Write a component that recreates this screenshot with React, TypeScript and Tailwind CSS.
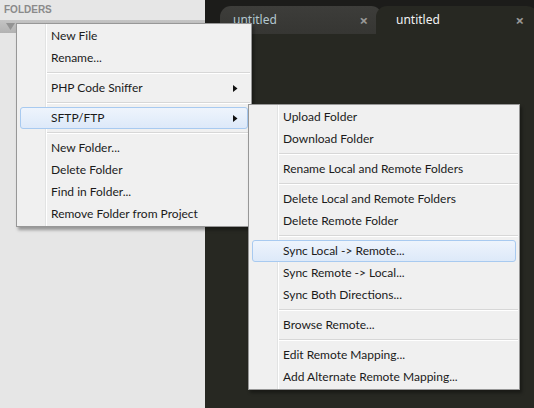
import React from 'react';

type Entry = { label: string; sub?: boolean; active?: boolean } | 'sep';

const folderMenu: Entry[] = [
    { label: 'New File' },
    { label: 'Rename...' },
    'sep',
    { label: 'PHP Code Sniffer', sub: true },
    'sep',
    { label: 'SFTP/FTP', sub: true, active: true },
    'sep',
    { label: 'New Folder...' },
    { label: 'Delete Folder' },
    { label: 'Find in Folder...' },
    { label: 'Remove Folder from Project' },
];

const sftpMenu: Entry[] = [
    { label: 'Upload Folder' },
    { label: 'Download Folder' },
    'sep',
    { label: 'Rename Local and Remote Folders' },
    'sep',
    { label: 'Delete Local and Remote Folders' },
    { label: 'Delete Remote Folder' },
    'sep',
    { label: 'Sync Local -> Remote...', active: true },
    { label: 'Sync Remote -> Local...' },
    { label: 'Sync Both Directions...' },
    'sep',
    { label: 'Browse Remote...' },
    'sep',
    { label: 'Edit Remote Mapping...' },
    { label: 'Add Alternate Remote Mapping...' },
];

function ContextMenu({ items, className }: { items: Entry[]; className: string }) {
    return (
        <div
            className={`absolute border border-[#979797] bg-[#f0f0f0] py-px shadow-[2px_3px_3px_rgba(0,0,0,0.35)] ${className}`}
            style={{ fontFamily: 'Lato, "Liberation Sans", sans-serif' }}
        >
            {/* gutter line */}
            <div className="absolute top-0 bottom-0 left-[28px] w-[2px] border-l border-[#e2e3e3] bg-white" />
            {items.map((item, i) =>
                item === 'sep' ? (
                    <div key={i} className="h-2 flex items-center pl-[30px] pr-[1px]">
                        <div className="w-full h-[2px] border-t border-[#d7d7d7] bg-white" />
                    </div>
                ) : (
                    <div
                        key={i}
                        className={`relative h-[22px] mx-[3px] flex items-center pl-[30px] pr-2 text-[12px] text-[#1b1b1b] rounded-[3px] border ${
                            item.active
                                ? 'border-[#a8caf0] bg-gradient-to-b from-[#eef4fc] to-[#dde9f9]'
                                : 'border-transparent'
                        }`}
                    >
                        <span className="flex-1 whitespace-nowrap">{item.label}</span>
                        {item.sub && (
                            <svg width="5" height="7" viewBox="0 0 5 7" className="mr-[1px]">
                                <path d="M0 0 L4.5 3.5 L0 7 Z" fill="#111" />
                            </svg>
                        )}
                    </div>
                )
            )}
        </div>
    );
}

function Tab({ title, active }: { title: string; active?: boolean }) {
    return (
        <div
            className={`h-[28px] w-[162px] flex items-center justify-between pl-[13px] pr-[14px] rounded-t-[11px] text-[12px] ${
                active
                    ? 'bg-[#272822] text-[#f2f2f2] -ml-[6px] pl-[20px] z-10'
                    : 'bg-gradient-to-b from-[#3d3d3a] to-[#363633] text-[#b3c7cf] shadow-[0_1px_0_#1f1f1d]'
            }`}
            style={{ fontFamily: '"Noto Sans", "Open Sans", sans-serif' }}
        >
            <span>{title}</span>
            <span className="text-[15px] leading-none font-bold text-[#9a9a98]">×</span>
        </div>
    );
}

export default function App() {
    return (
        <div className="relative w-[534px] h-[408px] overflow-hidden flex bg-[#272822]">
            <aside className="w-[205px] shrink-0 h-full bg-[#e6e6e6] flex flex-col">
                <div
                    className="h-[20px] pl-1 pt-[5px] text-[10px] font-bold leading-none text-[#8a8a8a]"
                    style={{ fontFamily: '"Liberation Sans", Arial, sans-serif' }}
                >
                    FOLDERS
                </div>
                <div className="h-[13px] bg-gradient-to-b from-[#c4c4c4] to-[#b2b2b2] flex items-center pl-[6px]">
                    <svg width="9" height="7" viewBox="0 0 9 7">
                        <path d="M0 0 H9 L4.5 7 Z" fill="#939393" />
                    </svg>
                </div>
            </aside>

            <main className="flex-1 flex flex-col">
                <div className="h-[34px] bg-[#1c1c1a] flex items-end pl-[15px]">
                    <Tab title="untitled" />
                    <Tab title="untitled" active />
                </div>
                <div className="flex-1 bg-[#272822]" />
            </main>

            <ContextMenu items={folderMenu} className="left-[16px] top-[23px] w-[236px]" />
            <ContextMenu items={sftpMenu} className="left-[248px] top-[104px] w-[272px]" />
        </div>
    );
}
